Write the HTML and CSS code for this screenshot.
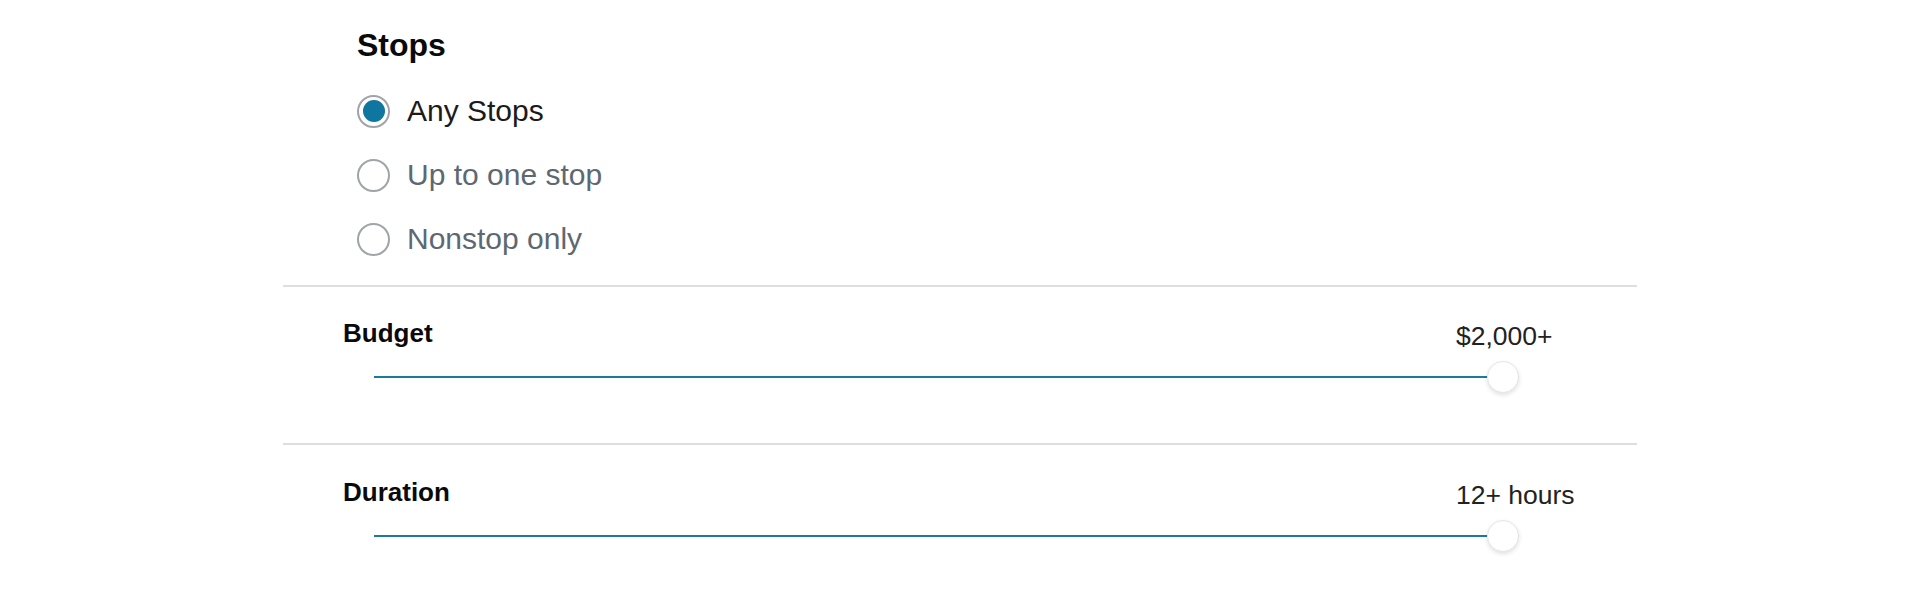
FILE: index.html
```html
<!DOCTYPE html>
<html lang="en">
<head>
  <meta charset="UTF-8">
  <title>Flight Filters</title>
  <link rel="stylesheet" href="styles.css">
</head>
<body>
  <div class="panel">
    <section class="stops">
      <h2>Stops</h2>
      <div class="options">
        <label class="option selected">
          <input type="radio" name="stops" checked>
          <span>Any Stops</span>
        </label>
        <label class="option">
          <input type="radio" name="stops">
          <span>Up to one stop</span>
        </label>
        <label class="option">
          <input type="radio" name="stops">
          <span>Nonstop only</span>
        </label>
      </div>
    </section>

    <section class="range">
      <div class="range-head">
        <span class="range-title">Budget</span>
        <span class="range-value">$2,000+</span>
      </div>
      <input class="slider" type="range" min="0" max="2000" value="2000">
    </section>

    <section class="range">
      <div class="range-head">
        <span class="range-title">Duration</span>
        <span class="range-value">12+ hours</span>
      </div>
      <input class="slider" type="range" min="0" max="12" value="12">
    </section>
  </div>
</body>
</html>
```
FILE: styles.css
```css
body {
  margin: 0;
  background: #fff;
  color: #111;
  font-family: "Liberation Sans", Arial, sans-serif;
}
.panel {
  width: 1354px;
  margin-left: 283px;
}
.stops {
  padding: 25px 0 26px 74px;
}
.stops h2 {
  margin: 0 0 26px;
  font-size: 32px;
  line-height: 40px;
  font-weight: bold;
  color: #0a0a0a;
}
.options {
  display: flex;
  flex-direction: column;
  gap: 24px;
}
.option {
  display: flex;
  align-items: center;
  height: 40px;
  font-size: 30px;
  color: #5d6871;
}
.option.selected {
  color: #1b1b1b;
}
.option input {
  -webkit-appearance: none;
  appearance: none;
  width: 33px;
  height: 33px;
  margin: 0 17px 0 0;
  border: 2px solid #a0a4a8;
  border-radius: 50%;
  background: #fff;
  box-sizing: border-box;
  display: flex;
  align-items: center;
  justify-content: center;
}
.option input:checked::after {
  content: "";
  width: 22px;
  height: 22px;
  border-radius: 50%;
  background: #0f76a0;
}
.range {
  border-top: 2px solid #dedede;
  padding: 30px 0 50px 60px;
}
.range + .range {
  padding-top: 31px;
}
.range-head {
  display: grid;
  grid-template-columns: 1113px auto;
  align-items: start;
  height: 32px;
  line-height: 32px;
  font-size: 26px;
}
.range-title {
  font-weight: bold;
  color: #0a0a0a;
}
.range-value {
  margin-top: 3px;
  font-size: 26.5px;
  color: #222;
}
.slider {
  -webkit-appearance: none;
  appearance: none;
  display: block;
  width: 1145px;
  height: 32px;
  margin: 12px 0 0 31px;
  padding: 0;
  background: transparent;
}
.slider::-webkit-slider-runnable-track {
  height: 2px;
  background: #1c7a9b;
}
.slider::-webkit-slider-thumb {
  -webkit-appearance: none;
  width: 32px;
  height: 32px;
  margin-top: -15px;
  border-radius: 50%;
  border: 1px solid #e6e6e6;
  background: #fff;
  box-shadow: 0 2px 4px rgba(0, 0, 0, 0.12);
  box-sizing: border-box;
}
.slider::-moz-range-track {
  height: 2px;
  background: #1c7a9b;
}
.slider::-moz-range-thumb {
  width: 32px;
  height: 32px;
  border-radius: 50%;
  border: 1px solid #e6e6e6;
  background: #fff;
  box-shadow: 0 2px 4px rgba(0, 0, 0, 0.12);
  box-sizing: border-box;
}
```
